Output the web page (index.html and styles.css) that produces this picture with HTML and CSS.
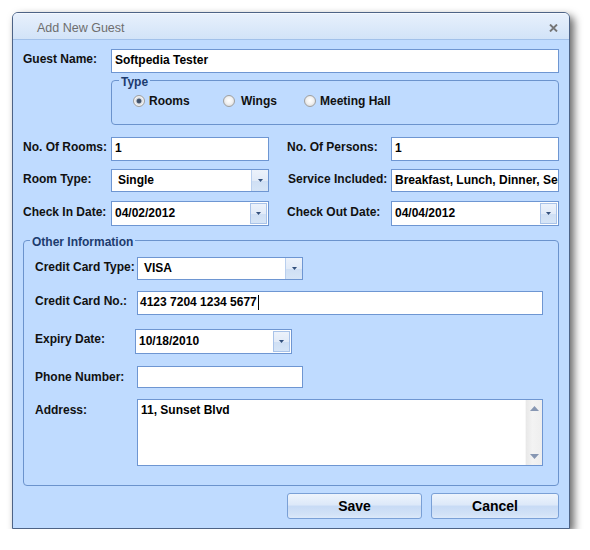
FILE: index.html
```html
<!DOCTYPE html>
<html>
<head>
<meta charset="utf-8">
<title>Add New Guest</title>
<link rel="stylesheet" href="styles.css">
</head>
<body>
<div class="window">
  <div class="titlebar">
    <span class="title">Add New Guest</span>
    <svg class="close" width="9" height="8" viewBox="0 0 9 8"><path d="M1 0.5 L8 7.5 M8 0.5 L1 7.5" stroke="#767676" stroke-width="1.9" fill="none"/></svg>
  </div>
  <div class="content">
    <div class="row-guest">
      <span class="lbl">Guest Name:</span>
      <div class="fld">Softpedia Tester</div>
    </div>

    <fieldset class="group group-type">
      <legend>Type</legend>
      <div class="radios">
        <div class="opt opt-rooms"><span class="radio on"></span><span class="lbl">Rooms</span></div>
        <div class="opt opt-wings"><span class="radio"></span><span class="lbl">Wings</span></div>
        <div class="opt"><span class="radio"></span><span class="lbl">Meeting Hall</span></div>
      </div>
    </fieldset>

    <div class="pair pair-rooms">
      <span class="lbl">No. Of Rooms:</span>
      <div class="fld">1</div>
      <span class="lbl lbl-right">No. Of Persons:</span>
      <div class="fld">1</div>
    </div>

    <div class="pair pair-type">
      <span class="lbl">Room Type:</span>
      <div class="fld combo list"><span class="val">Single</span><span class="drop"><svg width="5" height="3" viewBox="0 0 5 3"><path d="M0 0H5L2.5 3Z" fill="#33507c"/></svg></span></div>
      <span class="lbl lbl-right">Service Included:</span>
      <div class="fld">Breakfast, Lunch, Dinner, Sea Food</div>
    </div>

    <div class="pair pair-dates">
      <span class="lbl">Check In Date:</span>
      <div class="fld combo date"><span class="val">04/02/2012</span><span class="drop"><svg width="5" height="3" viewBox="0 0 5 3"><path d="M0 0H5L2.5 3Z" fill="#33507c"/></svg></span></div>
      <span class="lbl lbl-right">Check Out Date:</span>
      <div class="fld combo date"><span class="val">04/04/2012</span><span class="drop"><svg width="5" height="3" viewBox="0 0 5 3"><path d="M0 0H5L2.5 3Z" fill="#33507c"/></svg></span></div>
    </div>

    <fieldset class="group group-info">
      <legend>Other Information</legend>
      <div class="info-row info-cctype">
        <span class="lbl lbl-info">Credit Card Type:</span>
        <div class="fld combo list"><span class="val">VISA</span><span class="drop"><svg width="5" height="3" viewBox="0 0 5 3"><path d="M0 0H5L2.5 3Z" fill="#33507c"/></svg></span></div>
      </div>
      <div class="info-row info-ccno">
        <span class="lbl lbl-info">Credit Card No.:</span>
        <div class="fld">4123 7204 1234 5677<span class="caret"></span></div>
      </div>
      <div class="info-row info-expiry">
        <span class="lbl lbl-info">Expiry Date:</span>
        <div class="fld combo date"><span class="val">10/18/2010</span><span class="drop"><svg width="5" height="3" viewBox="0 0 5 3"><path d="M0 0H5L2.5 3Z" fill="#33507c"/></svg></span></div>
      </div>
      <div class="info-row info-phone">
        <span class="lbl lbl-info">Phone Number:</span>
        <div class="fld"></div>
      </div>
      <div class="info-row info-address">
        <span class="lbl lbl-info">Address:</span>
        <div class="memo">
          <div class="memo-text">11, Sunset Blvd</div>
          <div class="vscroll">
            <span class="sbtn"><svg width="9" height="5" viewBox="0 0 9 5"><path d="M0 5L4.5 0L9 5Z" fill="#8797b3"/></svg></span>
            <span class="sbtn"><svg width="9" height="5" viewBox="0 0 9 5"><path d="M0 0H9L4.5 5Z" fill="#8797b3"/></svg></span>
          </div>
        </div>
      </div>
    </fieldset>

    <div class="buttons">
      <button class="btn btn-save">Save</button>
      <button class="btn btn-cancel">Cancel</button>
    </div>
  </div>
</div>
</body>
</html>
```

FILE: styles.css
```css
* { box-sizing: border-box; }

body {
  margin: 0;
  background: #ffffff;
  font-family: "Liberation Sans", Arial, sans-serif;
}

.window {
  margin: 12px 0 0 12px;
  width: 558px;
  border: 1px solid #4d6386;
  border-radius: 6px 6px 0 0;
  background: #bfdbff;
  box-shadow: 4px 4px 9px rgba(0, 0, 0, 0.6);
}

.titlebar {
  height: 27px;
  display: flex;
  align-items: center;
  justify-content: space-between;
  padding: 3px 11px 0 24px;
  background: linear-gradient(#e7f0fc, #d2e3f8);
  border-bottom: 1px solid #a2c1ea;
  border-top: 1px solid #f4f8fe;
  border-radius: 5px 5px 0 0;
}

.title {
  font-size: 12.5px;
  color: #6e6e6e;
}

.close { display: block; }

.content {
  display: flex;
  flex-direction: column;
  padding: 9px 10px 9px 10px;
}

.lbl {
  font-weight: bold;
  font-size: 12px;
  line-height: 14px;
  color: #111111;
  white-space: nowrap;
}

.fld {
  background: #ffffff;
  border: 1px solid #6e96d2;
  font-weight: bold;
  font-size: 12px;
  line-height: 14px;
  color: #000000;
  padding: 0 3px 2px;
  display: flex;
  align-items: center;
  white-space: nowrap;
  overflow: hidden;
}

.row-guest {
  display: flex;
  height: 24px;
}
.row-guest .lbl { width: 88px; padding-top: 3px; }
.row-guest .fld { width: 448px; }

.group {
  margin: 0;
  padding: 0;
  border: 1px solid #6b93cd;
  border-radius: 4px;
  min-width: 0;
}
.group legend {
  margin-left: 7px;
  padding: 3px 2px 0;
  font-weight: bold;
  font-size: 12px;
  line-height: 12px;
  color: #1d3b6e;
}

.group-type {
  margin-left: 88px;
  width: 448px;
  padding: 6px 0 16px 0;
}

.radios {
  display: grid;
  grid-template-columns: 90px 81px auto;
  height: 14px;
  padding-left: 21px;
}
.opt {
  display: flex;
  align-items: center;
  gap: 4px;
}
.opt-wings { gap: 6px; }

.radio {
  width: 12px;
  height: 12px;
  border-radius: 50%;
  border: 1px solid #a0a0a0;
  background: radial-gradient(circle at 50% 45%, #ffffff 0, #f2f2f2 45%, #cfcfcf 100%);
}
.radio.on {
  background: radial-gradient(circle at 50% 50%, #3d4d63 0, #44566f 2px, #cdd3db 2.8px, #f4f4f4 60%, #d2d2d2 100%);
}

.pair {
  display: grid;
  grid-template-columns: 88px 158px 122px 168px;
}
.pair .lbl { padding-top: 3px; }
.pair .lbl-right { padding-left: 18px; }

.pair-rooms { height: 24px; margin-top: 12px; }
.pair-type { height: 23px; margin-top: 8px; }
.pair-dates { height: 25px; margin-top: 9px; }
.pair-dates .lbl { padding-top: 4px; }
.pair-type .lbl-right { padding-left: 19px; }

.combo {
  padding-right: 0;
  padding-bottom: 0;
  align-items: stretch;
}
.combo .val {
  flex: 1;
  display: flex;
  align-items: center;
  padding-bottom: 2px;
}
.combo.list { padding-left: 6px; }
.combo.date { padding-left: 3px; }

.drop {
  width: 17px;
  display: flex;
  align-items: center;
  justify-content: center;
  background: linear-gradient(#ecf2fb 0, #e2ebf8 50%, #cfdff4 52%, #d6e5f7 100%);
  border-left: 1px solid #b9cfee;
}
.combo.date .drop {
  margin: 1px 1px 1px 0;
  border: 1px solid #a9c3e9;
}

.group-info {
  margin-top: 7px;
  width: 536px;
  padding: 9px 0 19px 0;
}
.group-info legend { margin-left: 6px; }

.info-row { display: flex; margin-left: 11px; }
.lbl-info { width: 102px; padding-top: 3px; }

.info-cctype { height: 23px; }
.info-cctype .fld { width: 166px; }

.info-ccno { height: 24px; margin-top: 11px; }
.info-ccno .fld { width: 406px; padding-left: 2px; }

.info-expiry { height: 25px; margin-top: 14px; }
.info-expiry .lbl-info { width: 100px; }
.info-expiry .fld { width: 157px; }

.info-phone { height: 22px; margin-top: 12px; }
.info-phone .lbl-info { padding-top: 4px; }
.info-phone .fld { width: 166px; }

.info-address { height: 67px; margin-top: 11px; }
.info-address .lbl-info { padding-top: 4px; }

.caret {
  display: inline-block;
  width: 1px;
  height: 15px;
  background: #000000;
  margin-left: 1px;
}

.memo {
  width: 406px;
  display: flex;
  background: #ffffff;
  border: 1px solid #6e96d2;
}
.memo-text {
  flex: 1;
  padding: 3px 3px;
  font-weight: bold;
  font-size: 12px;
  line-height: 14px;
  color: #000000;
}
.vscroll {
  width: 17px;
  display: flex;
  flex-direction: column;
  justify-content: space-between;
  background: linear-gradient(90deg, #e8e8e8, #f3f3f3 40%, #eeeeee);
  border-left: 1px solid #f7f7f7;
}
.sbtn {
  height: 17px;
  display: flex;
  align-items: center;
  justify-content: center;
}

.buttons {
  display: flex;
  justify-content: flex-end;
  gap: 9px;
  margin-top: 7px;
}
.btn {
  height: 26px;
  margin: 0;
  border: 1px solid #7aa0d6;
  border-radius: 3px;
  background: linear-gradient(#eef4fc 0, #dde9f9 44%, #c8dbf5 52%, #d2e2f7 85%, #dce9fa 100%);
  font-family: "Liberation Sans", Arial, sans-serif;
  font-weight: bold;
  font-size: 14px;
  color: #000000;
  padding: 0 0 1px;
}
.btn-save { width: 135px; }
.btn-cancel { width: 128px; }
```
